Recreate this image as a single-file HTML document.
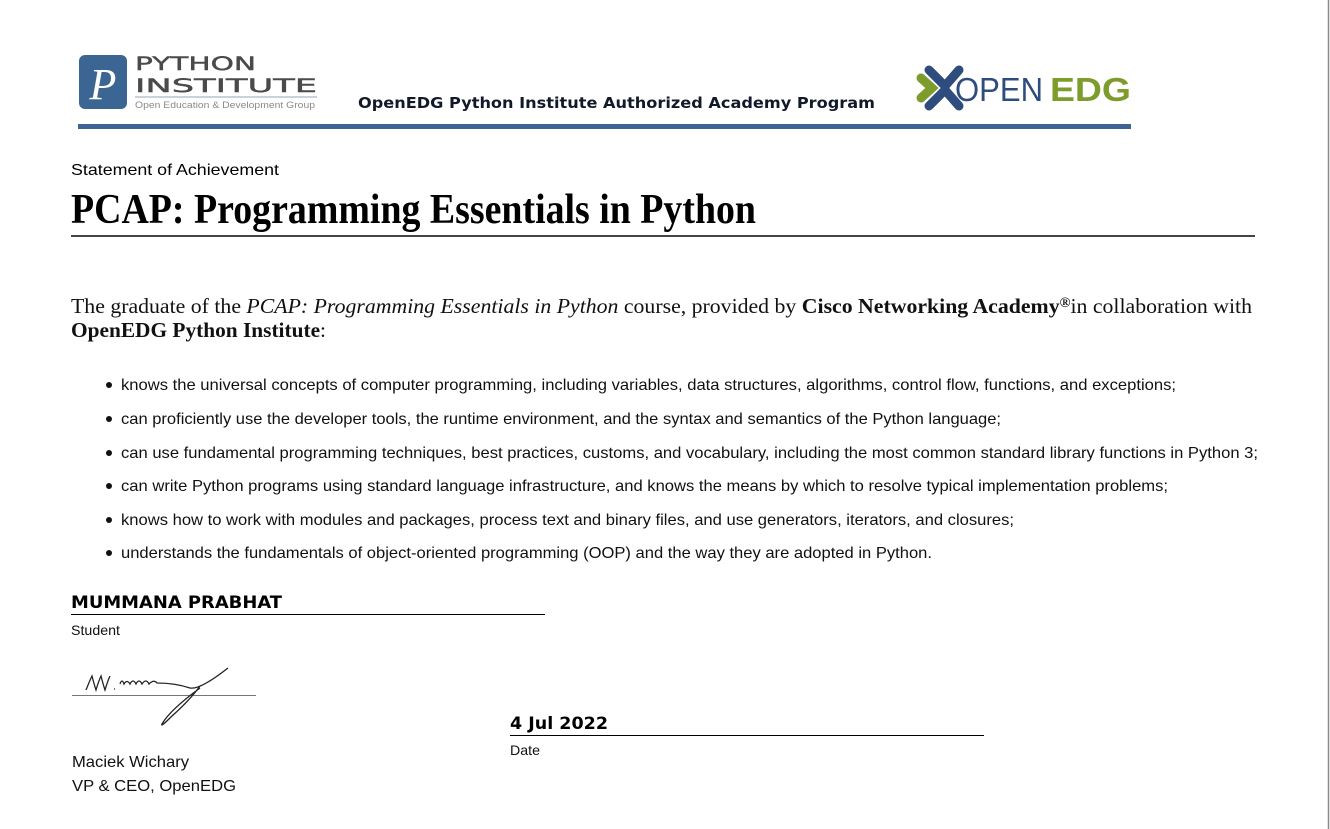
<!DOCTYPE html>
<html><head><meta charset="utf-8">
<style>
html,body{margin:0;padding:0;background:#fff;}
body{width:1330px;height:829px;overflow:hidden;}
svg{display:block}
.sans{font-family:"Liberation Sans",Arial,sans-serif}
.serif{font-family:"Liberation Serif","Times New Roman",serif}
.dv{font-family:"DejaVu Sans",Verdana,sans-serif}
</style></head>
<body>
<svg width="1330" height="829" viewBox="0 0 1330 829" xmlns="http://www.w3.org/2000/svg">
<rect x="0" y="0" width="1330" height="829" fill="#fff"/>
<line x1="1328.5" y1="0" x2="1328.5" y2="829" stroke="#8a8a8a" stroke-width="1.5"/>

<!-- Python Institute logo -->
<rect x="79" y="55" width="48" height="54" rx="6" fill="#3b6694"/>
<text x="103" y="99" text-anchor="middle" class="serif" font-style="italic" font-size="44" fill="#fff">P</text>
<text x="135" y="70" class="dv" font-size="19" fill="#4a4a4a" stroke="#4a4a4a" stroke-width="0.4" textLength="121" lengthAdjust="spacingAndGlyphs">PYTHON</text>
<text x="135" y="92" class="dv" font-size="19" fill="#4a4a4a" stroke="#4a4a4a" stroke-width="0.4" textLength="182" lengthAdjust="spacingAndGlyphs">INSTITUTE</text>
<line x1="135" y1="97" x2="317" y2="97" stroke="#9aa4b4" stroke-width="1"/>
<text x="135" y="108" class="sans" font-size="9" fill="#8a8a8a" textLength="180" lengthAdjust="spacingAndGlyphs">Open Education &amp; Development Group</text>

<text x="358" y="108" class="dv" font-weight="bold" font-size="15" fill="#111a28" textLength="517" lengthAdjust="spacingAndGlyphs">OpenEDG Python Institute Authorized Academy Program</text>

<!-- OpenEDG logo -->
<g stroke-linecap="round" stroke-width="9" fill="none">
<line x1="929" y1="70" x2="945" y2="86" stroke="#2e4d7e"/>
<line x1="959" y1="70" x2="945" y2="86" stroke="#2e4d7e"/>
<line x1="929" y1="106" x2="945" y2="90" stroke="#2e4d7e"/>
<line x1="959" y1="106" x2="945" y2="90" stroke="#2e4d7e"/>
<polyline points="921,78 932,88 921,98" stroke="#7d9c2c"/>
</g>
<text x="955" y="101" class="sans" font-size="33" fill="#2e4d7e" textLength="88" lengthAdjust="spacingAndGlyphs">OPEN</text>
<text x="1050" y="101" class="sans" font-weight="bold" font-size="33" fill="#7d9c2c" textLength="81" lengthAdjust="spacingAndGlyphs">EDG</text>

<rect x="78" y="124" width="1053" height="5" fill="#3d6494"/>

<!-- Title -->
<text x="71" y="175" class="sans" font-size="16" fill="#000" textLength="208" lengthAdjust="spacingAndGlyphs">Statement of Achievement</text>
<text x="71" y="223" class="serif" font-weight="bold" font-size="42" fill="#000" textLength="685" lengthAdjust="spacingAndGlyphs">PCAP: Programming Essentials in Python</text>
<rect x="71" y="235" width="1184" height="2" fill="#444"/>

<!-- Paragraph -->
<text x="71" y="313" class="serif" font-size="21" fill="#111" textLength="1181" lengthAdjust="spacingAndGlyphs">The graduate of the <tspan font-style="italic">PCAP: Programming Essentials in Python</tspan> course, provided by <tspan font-weight="bold">Cisco Networking Academy</tspan><tspan font-weight="bold" font-size="14" dy="-6">®</tspan><tspan dy="6">in collaboration with</tspan></text>
<text x="71" y="337" class="serif" font-size="21" fill="#111" textLength="255" lengthAdjust="spacingAndGlyphs"><tspan font-weight="bold">OpenEDG Python Institute</tspan>:</text>

<!-- Bullets -->
<g class="sans" font-size="16" fill="#111">
<circle cx="109" cy="385" r="3" fill="#111"/>
<text x="121" y="390" textLength="1055" lengthAdjust="spacingAndGlyphs">knows the universal concepts of computer programming, including variables, data structures, algorithms, control flow, functions, and exceptions;</text>
<circle cx="109" cy="419" r="3" fill="#111"/>
<text x="121" y="424" textLength="880" lengthAdjust="spacingAndGlyphs">can proficiently use the developer tools, the runtime environment, and the syntax and semantics of the Python language;</text>
<circle cx="109" cy="453" r="3" fill="#111"/>
<text x="121" y="458" textLength="1137" lengthAdjust="spacingAndGlyphs">can use fundamental programming techniques, best practices, customs, and vocabulary, including the most common standard library functions in Python 3;</text>
<circle cx="109" cy="486" r="3" fill="#111"/>
<text x="121" y="491" textLength="1047" lengthAdjust="spacingAndGlyphs">can write Python programs using standard language infrastructure, and knows the means by which to resolve typical implementation problems;</text>
<circle cx="109" cy="520" r="3" fill="#111"/>
<text x="121" y="525" textLength="893" lengthAdjust="spacingAndGlyphs">knows how to work with modules and packages, process text and binary files, and use generators, iterators, and closures;</text>
<circle cx="109" cy="553" r="3" fill="#111"/>
<text x="121" y="558" textLength="811" lengthAdjust="spacingAndGlyphs">understands the fundamentals of object-oriented programming (OOP) and the way they are adopted in Python.</text>
</g>

<!-- Student -->
<text x="71" y="608" class="dv" font-weight="bold" font-size="17" fill="#000" textLength="211" lengthAdjust="spacingAndGlyphs">MUMMANA PRABHAT</text>
<line x1="71" y1="614.5" x2="545" y2="614.5" stroke="#000" stroke-width="1"/>
<text x="71" y="635" class="sans" font-size="14" fill="#111" textLength="49" lengthAdjust="spacingAndGlyphs">Student</text>

<!-- Signature -->
<line x1="72" y1="695.5" x2="256" y2="695.5" stroke="#777" stroke-width="1"/>
<path d="M86,690 Q90,680 92,676 Q94,684 96,690 Q99,680 101,676 Q103,684 105,690 Q108,680 110,676 M114,689 l1,0 M120,684 q2,-6 4,0 q3,-5 6,0 q3,-6 6,0 q3,-6 6,0 q4,-6 7,0 q5,-5 8,-1 Q175,683 190,688 Q200,690 228,668 M200,686 Q190,700 172,716 Q160,728 162,724 Q170,710 200,688" stroke="#222" stroke-width="1.3" fill="none"/>

<text x="72" y="767" class="sans" font-size="16" fill="#111" textLength="117" lengthAdjust="spacingAndGlyphs">Maciek Wichary</text>
<text x="72" y="791" class="sans" font-size="16" fill="#111" textLength="164" lengthAdjust="spacingAndGlyphs">VP &amp; CEO, OpenEDG</text>

<!-- Date -->
<text x="510" y="729" class="dv" font-weight="bold" font-size="17" fill="#000" textLength="98" lengthAdjust="spacingAndGlyphs">4 Jul 2022</text>
<line x1="510" y1="735.5" x2="984" y2="735.5" stroke="#000" stroke-width="1"/>
<text x="510" y="755" class="sans" font-size="14" fill="#111" textLength="30" lengthAdjust="spacingAndGlyphs">Date</text>
</svg>
</body></html>
